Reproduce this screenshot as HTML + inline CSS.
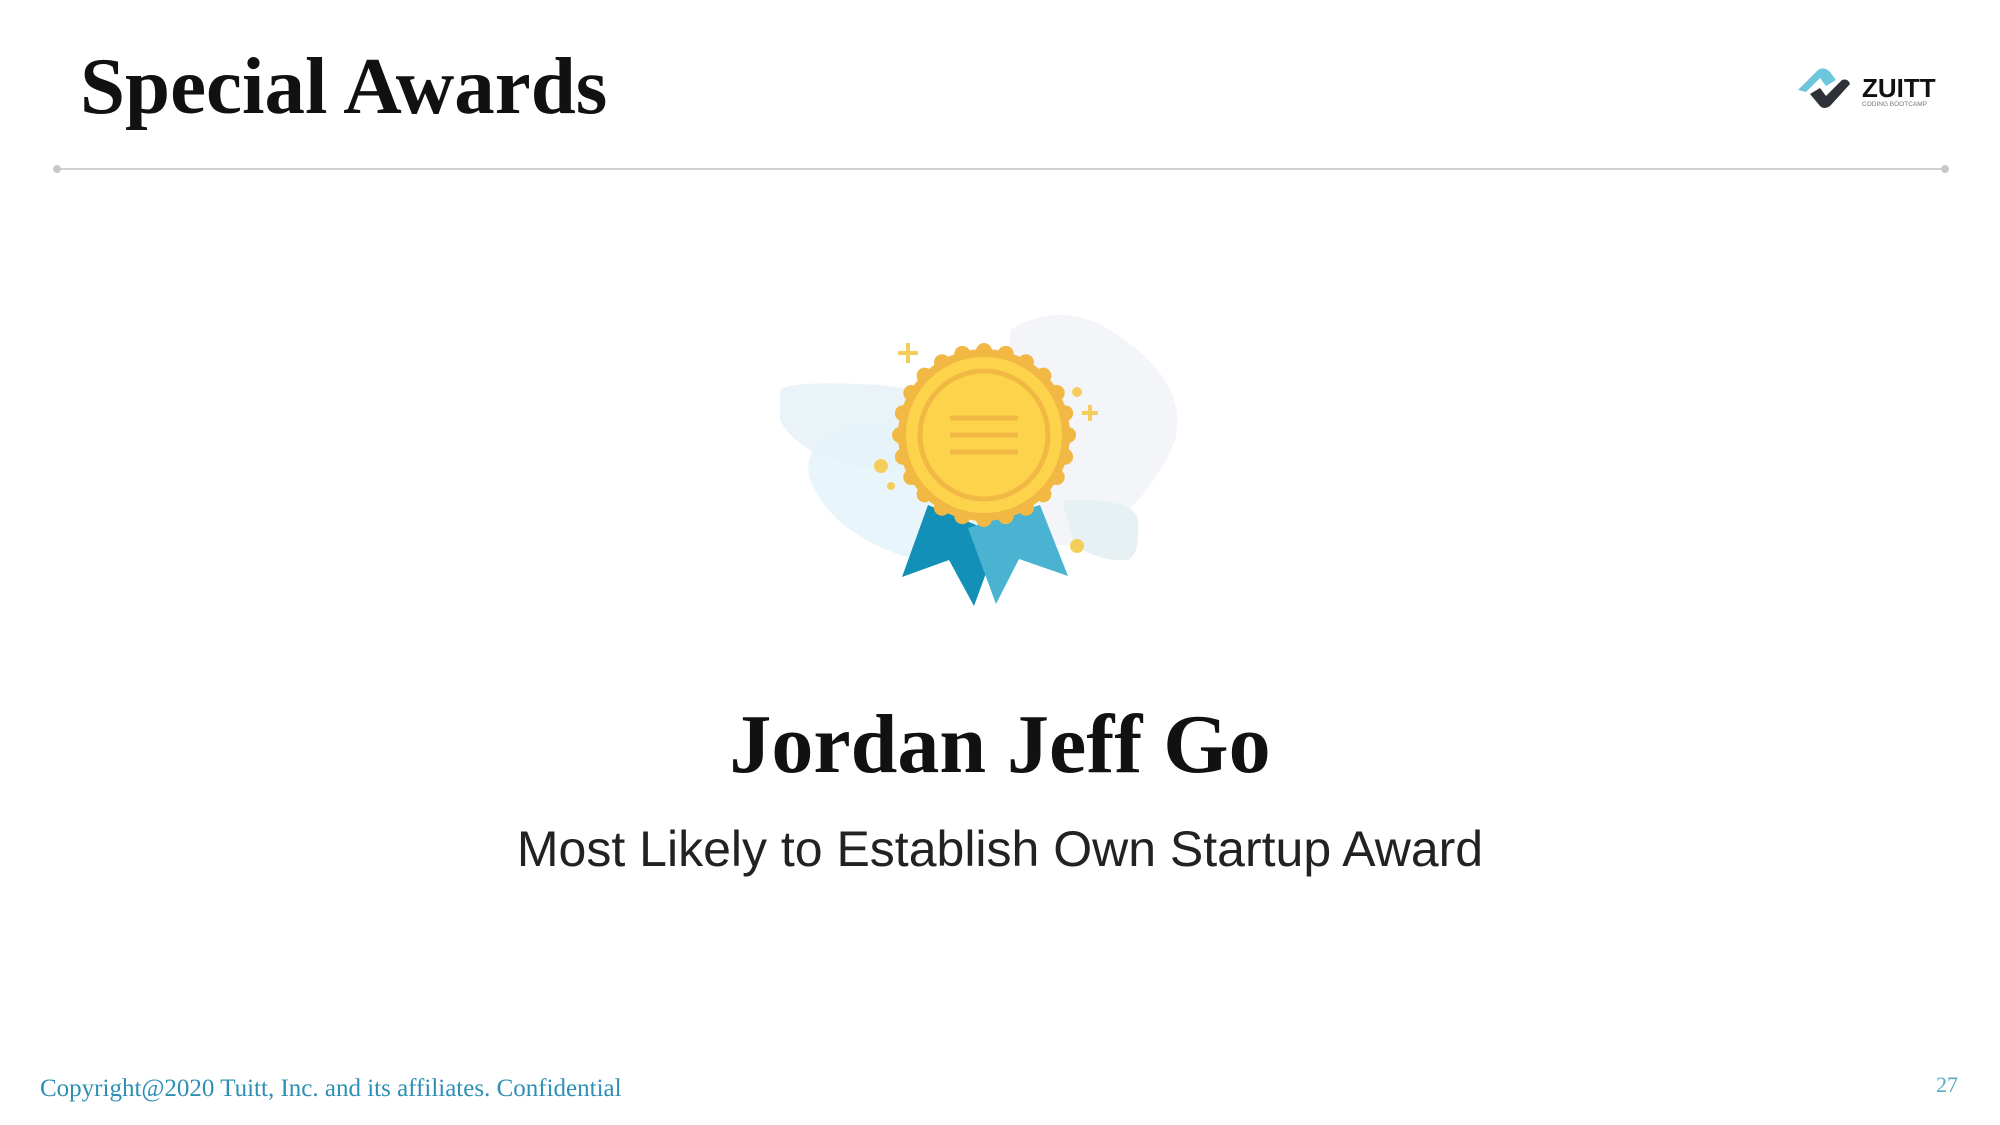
<!DOCTYPE html>
<html><head><meta charset="utf-8"><style>
html,body{margin:0;padding:0;background:#fff;}
body{width:2000px;height:1125px;position:relative;overflow:hidden;font-family:"Liberation Sans",sans-serif;}
.t{position:absolute;white-space:nowrap;}
</style></head><body>
<div class="t" style="left:80px;top:40px;font-family:'Liberation Serif',serif;font-weight:bold;font-size:81px;color:#111;">Special Awards</div>

<svg style="position:absolute;left:1790px;top:60px" width="180" height="60" viewBox="0 0 180 60">
  <path d="M8 30 L28 10 Q34 6 40 12 L46 20 L36 26 L30 18 L16 32 Z" fill="#6cc6dc"/>
  <path d="M20 34 L30 28 L36 36 L52 20 Q58 18 60 24 L40 46 Q34 50 30 46 Z" fill="#2f3138"/>
  <text x="72" y="37" font-family="Liberation Sans, sans-serif" font-weight="bold" font-size="26" fill="#111">ZUITT</text>
  <text x="72" y="46" font-family="Liberation Sans, sans-serif" font-size="6.5" fill="#777">CODING BOOTCAMP</text>
</svg>

<div style="position:absolute;left:57px;top:168px;width:1888px;height:2px;background:#d0d0d0"></div>
<div style="position:absolute;left:53px;top:165px;width:8px;height:8px;border-radius:50%;background:#c8c8c8"></div>
<div style="position:absolute;left:1941px;top:165px;width:8px;height:8px;border-radius:50%;background:#c8c8c8"></div>

<svg style="position:absolute;left:0;top:0" width="2000" height="700">
  <path d="M1010 330 Q1060 300 1110 330 Q1190 380 1175 440 Q1160 480 1120 520 Q1060 570 1010 520 Z" fill="#f3f5f9"/>
  <path d="M780 390 Q790 380 880 385 Q960 392 970 440 Q960 470 880 470 Q800 460 780 420 Z" fill="#eaf4f8"/>
  <path d="M810 480 Q800 440 850 425 Q920 420 960 450 Q1020 490 1000 550 Q960 570 900 555 Q830 530 810 480 Z" fill="#e6f4fa" opacity="0.9"/>
  <path d="M1063 505 Q1060 498 1090 500 Q1135 502 1138 520 Q1140 555 1128 560 Q1100 562 1075 545 Z" fill="#e7f1f4"/>
  <polygon points="928,505 902,577 949,560 974,606 1000,535" fill="#1390b8"/>
  <polygon points="968,528 996,604 1019,559 1068,576 1040,505" fill="#4ab3d2"/>
  <g stroke="#f5cd5a" stroke-width="4">
    <line x1="898" y1="353" x2="918" y2="353"/><line x1="908" y1="343" x2="908" y2="363"/>
    <line x1="1082" y1="413" x2="1098" y2="413"/><line x1="1090" y1="405" x2="1090" y2="421"/>
  </g>
  <g fill="#f5cd5a">
    <circle cx="1077" cy="392" r="5"/><circle cx="881" cy="466" r="7"/><circle cx="891" cy="486" r="4"/><circle cx="1077" cy="546" r="7"/>
  </g>
  <circle cx="984" cy="435" r="86" fill="#f2b844"/>
  <g fill="#f2b844" transform="translate(984 435)">
    <circle cx="84" cy="0" r="8" transform="rotate(0)"/><circle cx="84" cy="0" r="8" transform="rotate(15)"/><circle cx="84" cy="0" r="8" transform="rotate(30)"/><circle cx="84" cy="0" r="8" transform="rotate(45)"/><circle cx="84" cy="0" r="8" transform="rotate(60)"/><circle cx="84" cy="0" r="8" transform="rotate(75)"/><circle cx="84" cy="0" r="8" transform="rotate(90)"/><circle cx="84" cy="0" r="8" transform="rotate(105)"/><circle cx="84" cy="0" r="8" transform="rotate(120)"/><circle cx="84" cy="0" r="8" transform="rotate(135)"/><circle cx="84" cy="0" r="8" transform="rotate(150)"/><circle cx="84" cy="0" r="8" transform="rotate(165)"/><circle cx="84" cy="0" r="8" transform="rotate(180)"/><circle cx="84" cy="0" r="8" transform="rotate(195)"/><circle cx="84" cy="0" r="8" transform="rotate(210)"/><circle cx="84" cy="0" r="8" transform="rotate(225)"/><circle cx="84" cy="0" r="8" transform="rotate(240)"/><circle cx="84" cy="0" r="8" transform="rotate(255)"/><circle cx="84" cy="0" r="8" transform="rotate(270)"/><circle cx="84" cy="0" r="8" transform="rotate(285)"/><circle cx="84" cy="0" r="8" transform="rotate(300)"/><circle cx="84" cy="0" r="8" transform="rotate(315)"/><circle cx="84" cy="0" r="8" transform="rotate(330)"/><circle cx="84" cy="0" r="8" transform="rotate(345)"/>
  </g>
  <circle cx="984" cy="435" r="78" fill="#fdd34c"/>
  <circle cx="984" cy="435" r="64" fill="none" stroke="#f2b844" stroke-width="5"/>
  <g stroke="#f2b844" stroke-width="5">
    <line x1="950" y1="418" x2="1018" y2="418"/>
    <line x1="950" y1="435" x2="1018" y2="435"/>
    <line x1="950" y1="452" x2="1018" y2="452"/>
  </g>
</svg>

<div class="t" style="left:0;width:2000px;text-align:center;top:696px;font-family:'Liberation Serif',serif;font-weight:bold;font-size:84px;color:#111;">Jordan Jeff Go</div>
<div class="t" style="left:0;width:2000px;text-align:center;top:820px;font-size:50px;color:#222;">Most Likely to Establish Own Startup Award</div>

<div class="t" style="left:40px;top:1075px;font-family:'Liberation Serif',serif;font-size:25px;color:#2e8fb5;">Copyright@2020 Tuitt, Inc. and its affiliates. Confidential</div>
<div class="t" style="left:1936px;top:1072px;font-family:'Liberation Serif',serif;font-size:22px;color:#5aa8c8;">27</div>
</body></html>
